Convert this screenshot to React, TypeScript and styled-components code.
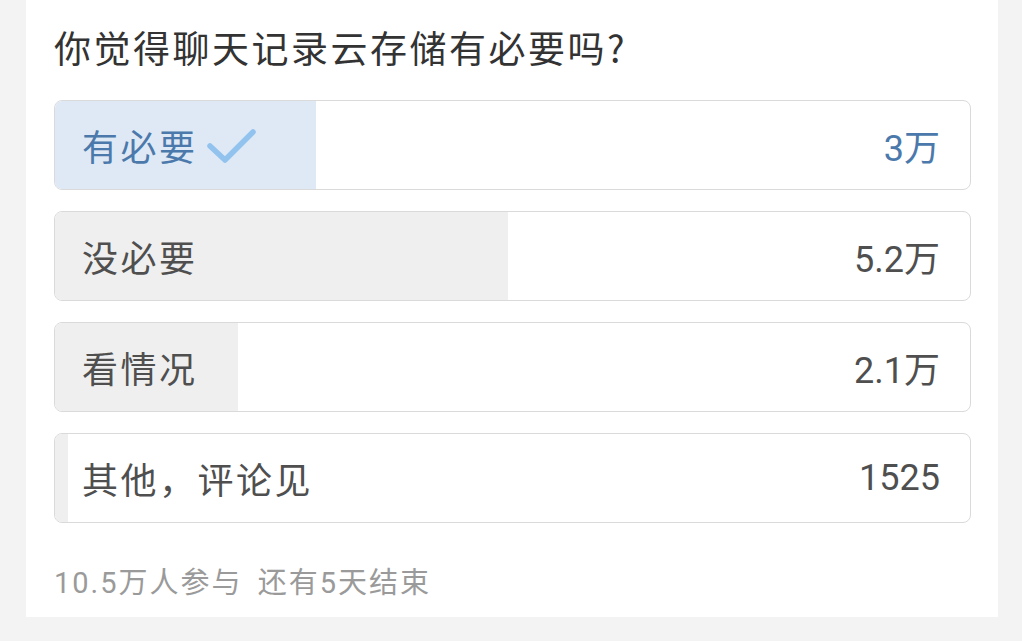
import React from "react";
import styled, { createGlobalStyle } from "styled-components";

const GlobalStyle = createGlobalStyle`
  html, body {
    margin: 0;
    padding: 0;
    background: #f3f3f3;
  }
  body {
    font-family: Roboto, "Noto Sans CJK SC", "Noto Sans", sans-serif;
  }
`

const Page = styled.div`
  width: 1022px;
  height: 641px;
  overflow: hidden;
  background: #f3f3f3;
`

const Card = styled.div`
  margin-left: 26px;
  width: 972px;
  height: 617px;
  box-sizing: border-box;
  background: #ffffff;
  padding: 22px 27px 0 28px;
`

const Title = styled.h1`
  margin: 0;
  font-family: "Noto Sans CJK SC", "Noto Sans", sans-serif;
  font-size: 37px;
  font-weight: 400;
  line-height: 50px;
  letter-spacing: 2.5px;
  color: #333333;
`

const OptionList = styled.div`
  margin-top: 28px;
  display: flex;
  flex-direction: column;
  gap: 21px;
`

const Option = styled.div<{ $selected?: boolean }>`
  position: relative;
  height: 90px;
  box-sizing: border-box;
  border: 1.5px solid #dadada;
  border-radius: 8px;
  overflow: hidden;
  display: flex;
  align-items: center;
  justify-content: space-between;
  padding: 0 30px 0 27px;
  color: ${(p) => (p.$selected ? "#4b79ab" : "#4f4f4f")};
`

const Fill = styled.div<{ $selected?: boolean }>`
  position: absolute;
  left: 0;
  top: 0;
  bottom: 0;
  background: ${(p) => (p.$selected ? "#dfe9f5" : "#efefef")};
`

const Label = styled.span`
  position: relative;
  display: flex;
  align-items: center;
  gap: 8px;
  font-size: 36px;
  letter-spacing: 2.5px;
`

const Count = styled.span`
  position: relative;
  font-size: 36px;
`

const Footer = styled.div`
  margin-top: 36px;
  font-size: 29px;
  letter-spacing: 2px;
  color: #9a9a9a;
  word-spacing: 6px;
`

const Check = () => (
  <svg width="50" height="40" viewBox="0 0 50 40">
    <path
      d="M4 21 L19 35 L47 7"
      fill="none"
      stroke="#92c3ee"
      strokeWidth="5.5"
      strokeLinecap="round"
      strokeLinejoin="round"
    />
  </svg>
)

const options = [
  { label: "有必要", count: "3万", votes: 30000, selected: true },
  { label: "没必要", count: "5.2万", votes: 52000 },
  { label: "看情况", count: "2.1万", votes: 21000 },
  { label: "其他，评论见", count: "1525", votes: 1525 },
]

const total = 105000

const App = () => {
  return (
    <Page>
      <GlobalStyle />
      <Card>
        <Title>你觉得聊天记录云存储有必要吗?</Title>
        <OptionList>
          {options.map((o) => (
            <Option key={o.label} $selected={o.selected}>
              <Fill $selected={o.selected} style={{ width: `${(o.votes / total) * 100}%` }} />
              <Label>
                {o.label}
                {o.selected && <Check />}
              </Label>
              <Count>{o.count}</Count>
            </Option>
          ))}
        </OptionList>
        <Footer>10.5万人参与 还有5天结束</Footer>
      </Card>
    </Page>
  )
}

export default App;
